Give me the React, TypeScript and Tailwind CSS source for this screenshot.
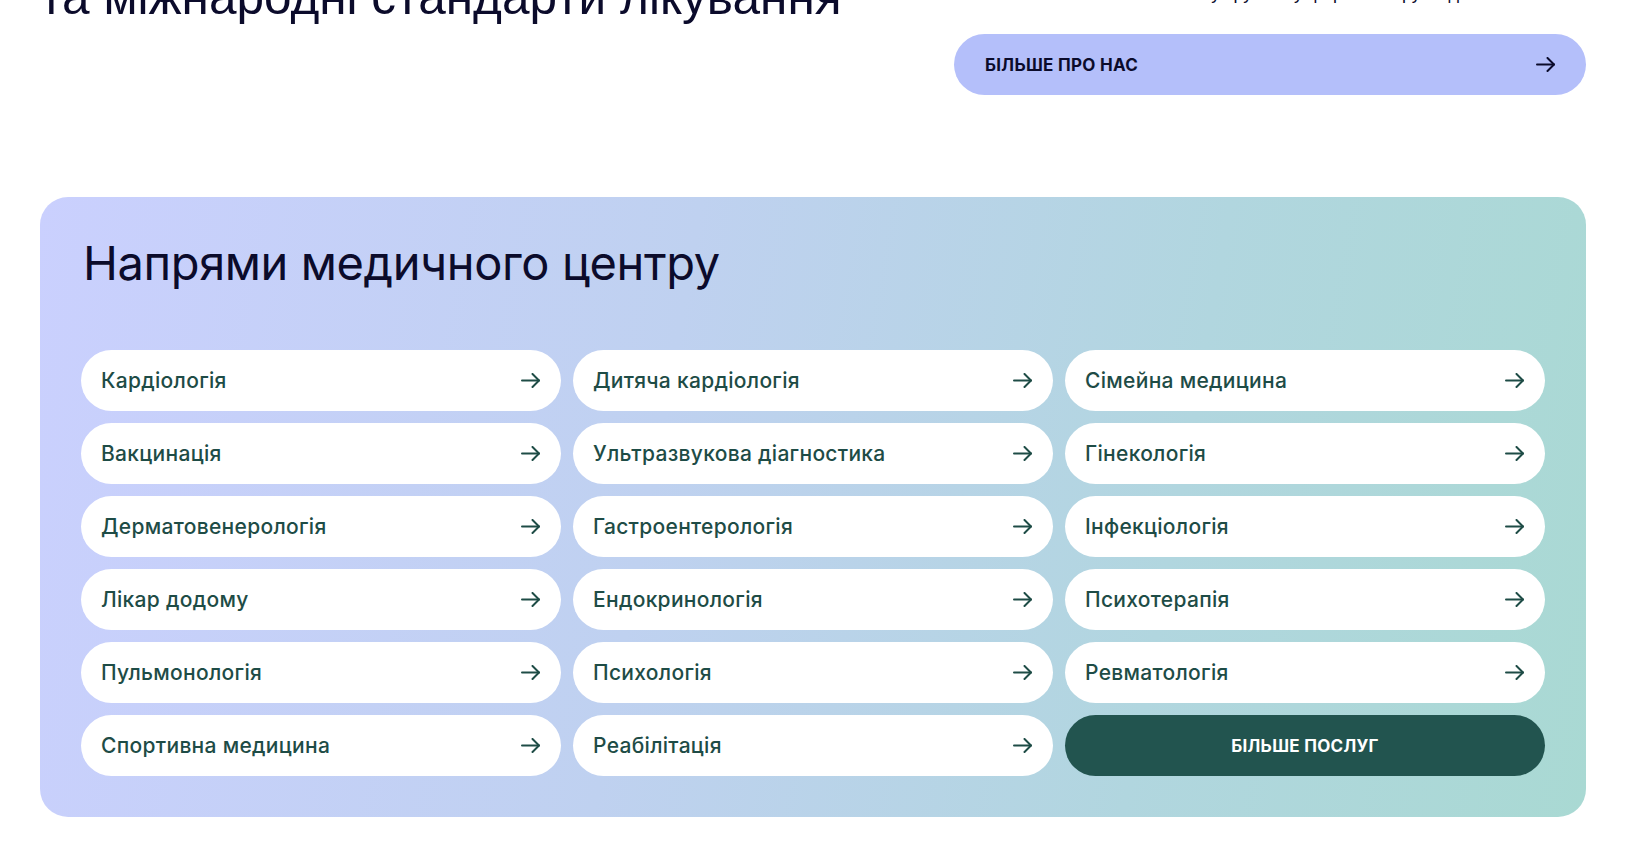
import React from "react";

const directions = [
  "Кардіологія",
  "Дитяча кардіологія",
  "Сімейна медицина",
  "Вакцинація",
  "Ультразвукова діагностика",
  "Гінекологія",
  "Дерматовенерологія",
  "Гастроентерологія",
  "Інфекціологія",
  "Лікар додому",
  "Ендокринологія",
  "Психотерапія",
  "Пульмонологія",
  "Психологія",
  "Ревматологія",
  "Спортивна медицина",
  "Реабілітація",
];

const Arrow = ({ className }: { className?: string }) => (
  <svg
    viewBox="0 0 19 15"
    width="19"
    height="15"
    fill="none"
    stroke="currentColor"
    strokeWidth="2"
    strokeLinecap="round"
    strokeLinejoin="round"
    className={className}
  >
    <path d="M1 7.5h17" />
    <path d="M11.5 1l6.5 6.5-6.5 6.5" />
  </svg>
);

const DirectionLink = ({ title }: { title: string }) => (
  <a
    href="#"
    className="flex h-[61px] items-center justify-between rounded-full bg-white pl-5 pr-[21px] text-[21px] font-medium tracking-[0.3px] text-[#1e4c46]"
  >
    <span className="pt-px">{title}</span>
    <Arrow />
  </a>
);

export default function App() {
  return (
    <div className="min-h-screen bg-white px-10 pb-10 font-['Inter','Liberation_Sans',sans-serif]">
      {/* About block, scrolled partly out of view */}
      <section className="-mt-[90px] flex items-start justify-between">
        <h2 className="font-['Liberation_Sans',Arial,sans-serif] text-[49.5px] leading-[58px] text-[#0b0b2b]">
          Сучасне обладнання
          <br />
          та міжнародні стандарти лікування
        </h2>
        <div className="w-[632px] pt-[13px]">
          <p className="pl-[172px] font-['Liberation_Sans',Arial,sans-serif] text-[18px] leading-[28px] text-[#0b0b2b]">
            Ми поєднуємо досвід лікарів і сучасні методи діагностики, щоб
            пацієнти отримували якісну допомогу вчасно та у зручному форматі
            поруч з домом
          </p>
          <a
            href="#"
            className="mt-[27px] flex h-[61px] items-center justify-between rounded-full bg-[#b4bffa] pl-[31px] pr-[31px] text-[17px] font-bold uppercase tracking-[0.3px] text-[#0b0b2b]"
          >
            <span className="pt-[3px]">Більше про нас</span>
            <Arrow />
          </a>
        </div>
      </section>

      {/* Directions */}
      <section className="mt-[102px] rounded-[28px] bg-[linear-gradient(100deg,#cad0fe_0%,#bfd1f0_40%,#b1d6df_72%,#a9d9d3_100%)] px-[41px] pb-[41px] pt-[38px]">
        <h2 className="pl-[2px] text-[47px] leading-[56px] tracking-[-0.4px] text-[#0b0b2b]">
          Напрями медичного центру
        </h2>
        <div className="mt-[59px] grid grid-cols-3 gap-3">
          {directions.map((d) => (
            <DirectionLink key={d} title={d} />
          ))}
          <a
            href="#"
            className="flex h-[61px] items-center justify-center rounded-full bg-[#22544f] pt-[2px] text-[17px] font-bold uppercase tracking-[0.3px] text-white"
          >
            Більше послуг
          </a>
        </div>
      </section>
    </div>
  );
}
